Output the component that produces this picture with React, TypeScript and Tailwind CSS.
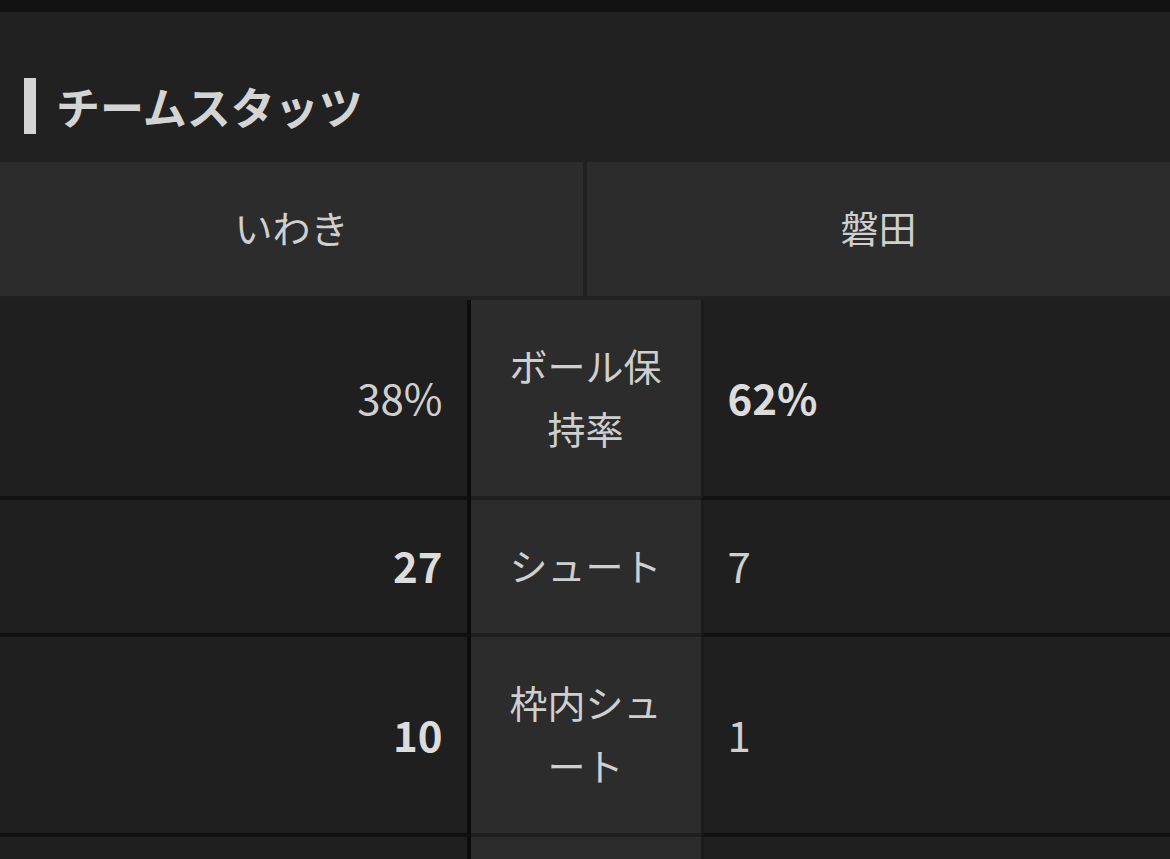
const stats = [
  { home: "38%", away: "62%", label: "ボール保持率", win: "away" },
  { home: "27", away: "7", label: "シュート", win: "home" },
  { home: "10", away: "1", label: "枠内シュート", win: "home" },
  { home: "\u00a0", away: "\u00a0", label: "\u00a0", win: "" },
];

export default function App() {
  return (
    <div
      className="min-h-screen bg-[#212121] text-[#cfcfcf]"
      style={{ fontFamily: '"Noto Sans CJK JP", "Noto Sans", sans-serif' }}
    >
      <div className="h-[12px] bg-[#121212]" />

      <div className="flex items-center h-[150px] pl-[24px] pt-[38px]">
        <div className="w-[12px] h-[56px] bg-[#d4d4d4]" />
        <h2 className="ml-[20px] text-[44px] font-bold text-[#d4d4d4] leading-none">
          チームスタッツ
        </h2>
      </div>

      <div className="grid grid-cols-2 gap-[4px] pb-[4px]">
        <div className="h-[134px] pb-[6px] bg-[#2c2c2c] flex items-center justify-center text-[38px]">
          いわき
        </div>
        <div className="h-[134px] pb-[6px] bg-[#2c2c2c] flex items-center justify-center text-[38px]">
          磐田
        </div>
      </div>

      {stats.map((s, i) => (
        <div key={i} className="flex">
          <div
            className={`flex-1 flex items-center justify-end pr-[24px] pb-[4px] bg-[#1f1f1f] border-r-4 border-r-[#0c0c0c] border-b-4 border-b-[#111111] text-[42px] ${
              s.win === "home" ? "font-bold text-[#dcdcdc]" : ""
            }`}
          >
            {s.home}
          </div>
          <div className="w-[230px] shrink-0 bg-[#2c2c2c] border-b-4 border-b-[#1f1f1f] px-[38px] pt-[33px] pb-[37px] text-[38px] leading-[63px] text-center">
            {s.label}
          </div>
          <div
            className={`flex-1 flex items-center pl-[24px] pb-[4px] bg-[#1f1f1f] border-l-[3px] border-l-[#1b1b1b] border-b-4 border-b-[#111111] text-[42px] ${
              s.win === "away" ? "font-bold text-[#dcdcdc]" : ""
            }`}
          >
            {s.away}
          </div>
        </div>
      ))}
    </div>
  );
}
